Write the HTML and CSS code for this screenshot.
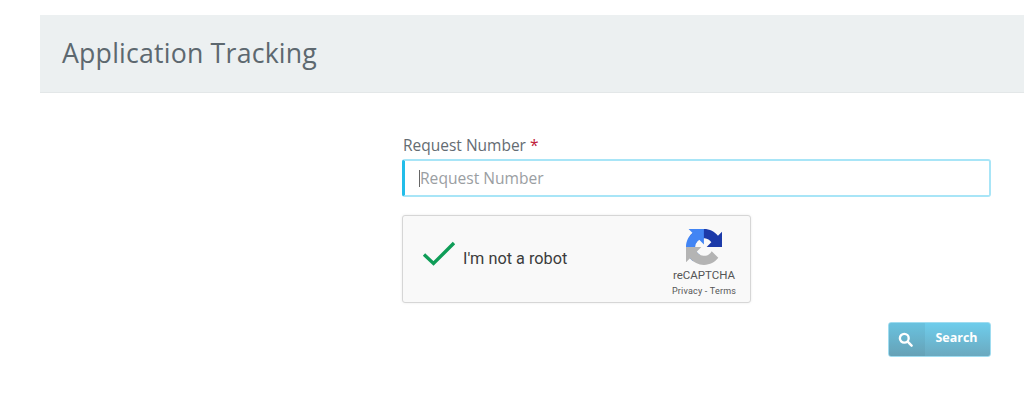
FILE: index.html
```html
<!DOCTYPE html>
<html lang="en">
<head>
<meta charset="utf-8">
<title>Application Tracking</title>
<link rel="stylesheet" href="styles.css">
</head>
<body>
<main class="page">
  <header class="page-header"><h1 class="page-title">Application Tracking</h1></header>
  <form class="form">
    <label class="label">Request Number <span class="req">*</span></label>
    <div class="input"><span class="caret"></span><span class="placeholder">Request Number</span></div>
    <div class="captcha">
      <svg class="check" viewBox="0 0 34 26" width="34" height="26" aria-hidden="true"><path d="M2 13.500 L11.500 22.500 L32 2" fill="none" stroke="#0f9d58" stroke-width="3.400"/></svg>
      <span class="captcha-text">I'm not a robot</span>
      <div class="captcha-brand">
        <svg class="logo" viewBox="0 0 64 64" width="36" height="36" aria-hidden="true">
          <path d="M64 31.955l-.033-1.37V4.687l-7.16 7.16C50.948 4.674 42.033.093 32.05.093c-10.4 0-19.622 4.96-25.458 12.64l11.736 11.86a15.55 15.55 0 0 1 4.754-5.334c2.05-1.6 4.952-2.906 8.968-2.906.485 0 .86.057 1.135.163 4.976.393 9.288 3.14 11.828 7.124l-8.307 8.307c10.522-.04 22.4-.047 27.295.003" fill="#1c3aa9"/>
          <path d="M31.862.094l-1.37.033H4.594l7.16 7.16C4.58 13.147 0 22.06 0 32.044c0 10.4 4.96 19.622 12.64 25.458L24.5 45.766a15.55 15.55 0 0 1-5.334-4.754c-1.6-2.05-2.906-4.952-2.906-8.968 0-.485.057-.86.163-1.135.393-4.976 3.14-9.288 7.124-11.828l8.307 8.307c-.04-10.522-.047-22.4.003-27.295" fill="#4285f4"/>
          <path d="M.001 32.045l.033 1.37v25.898l7.16-7.16c5.86 7.173 14.774 11.754 24.76 11.754 10.4 0 19.622-4.96 25.458-12.64L45.676 39.41a15.55 15.55 0 0 1-4.754 5.334c-2.05 1.6-4.952 2.906-8.968 2.906-.485 0-.86-.057-1.135-.163-4.976-.393-9.288-3.14-11.828-7.124l8.307-8.307c-10.522.04-22.4.047-27.295-.003" fill="#b4b4b4"/>
        </svg>
        <span class="brand-name">reCAPTCHA</span>
        <span class="brand-links">Privacy <i>-</i> Terms</span>
      </div>
    </div>
    <div class="actions">
      <button type="button" class="btn">
        <span class="btn-icon"><svg viewBox="0 0 16 16" width="15" height="15" aria-hidden="true"><circle cx="6.700" cy="6.700" r="4.700" fill="none" stroke="#fff" stroke-width="2.500"/><path d="M10.300 10.300 L14.500 14.500" stroke="#fff" stroke-width="2.600" stroke-linecap="round"/></svg></span>
        <span class="btn-text">Search</span>
      </button>
    </div>
  </form>
</main>
</body>
</html>
```
FILE: styles.css
```css
* { box-sizing: border-box; }
html, body { margin: 0; background: #fff; }
body { font-family: "Open Sans", "Noto Sans", sans-serif; color: #5a6268; height: 405px; overflow: hidden; }
.page { padding: 15px 0 0 40px; }
.page-header { height: 78px; background: #ecf0f1; border-bottom: 1px solid #e3e7e8; padding: 0 22px 2px; display: flex; align-items: center; }
.page-title { margin: 0; font-size: 26.700px; font-weight: 400; color: #5d686f; letter-spacing: 0.2px; }
.form { width: 589px; margin: 42px 0 0 362px; }
.label { display: block; font-size: 15.500px; line-height: 20px; height: 24px; color: #646c72; padding-left: 1px; }
.req { color: #c0203a; }
.input { height: 38px; border: 2px solid #a8e5f7; border-left: 3px solid #22bde9; border-radius: 3px; display: flex; align-items: center; padding: 0 0 0 14px; }
.caret { width: 1px; height: 17px; background: #666; }
.placeholder { font-size: 15.600px; color: #9a9ea2; }
.captcha { width: 349px; height: 88px; margin-top: 18px; background: #f9f9f9; border: 1px solid #d6d6d6; border-radius: 3px; box-shadow: 0 0 3px rgba(0,0,0,.08); display: flex; align-items: center; padding: 0 13px 0 19px; }
.check { flex: none; margin-top: -10px; }
.captcha-text { font-family: Roboto, sans-serif; font-size: 16.300px; color: #3c3c3c; margin-left: 7px; flex: 1; padding-bottom: 2px; }
.captcha-brand { display: flex; flex-direction: column; align-items: center; width: 66px; padding-top: 7px; }
.logo { display: block; }
.brand-name { font-family: Roboto, sans-serif; font-size: 11.500px; line-height: 13px; color: #555; margin-top: 4px; }
.brand-links { font-family: Roboto, sans-serif; font-size: 9px; line-height: 11px; color: #555; margin-top: 4px; white-space: nowrap; letter-spacing: 0.2px; }
.brand-links i { font-style: normal; }
.actions { display: flex; justify-content: flex-end; margin-top: 19px; }
.btn { width: 103px; height: 35px; padding: 0; border: 1px solid #9fdcf0; border-radius: 3px; background: linear-gradient(#6ecdec, #6ba9bf); display: flex; align-items: stretch; color: #fff; font-family: inherit; }
.btn-icon { width: 36px; display: flex; align-items: center; justify-content: center; padding-right: 3px; background: rgba(60,90,100,.09); }
.btn-text { flex: 1; font-size: 12.500px; font-weight: 700; text-align: center; line-height: 30px; padding-right: 2px; }
```
